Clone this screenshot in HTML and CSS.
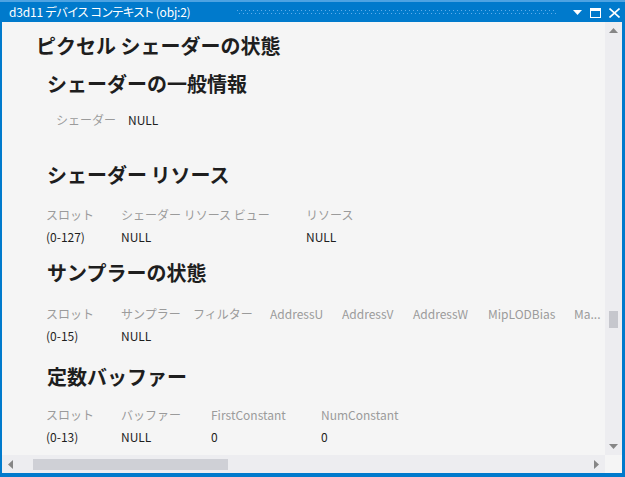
FILE: index.html
```html
<!DOCTYPE html>
<html lang="ja">
<head>
<meta charset="utf-8">
<link rel="stylesheet" href="styles.css">
</head>
<body>
<div class="window">
  <div class="titlebar">
    <span class="title">d3d11 デバイス コンテキスト (obj:2)</span>
    <span class="grip"></span>
    <span class="tbtns">
      <svg class="tb-drop" width="9" height="5" viewBox="0 0 9 5"><path d="M0 0H9L4.5 5Z" fill="#fff"/></svg>
      <svg class="tb-max" width="11" height="10" viewBox="0 0 11 10"><rect x="0.5" y="0.5" width="10" height="9" fill="none" stroke="#fff"/><rect x="0" y="0" width="11" height="3" fill="#fff"/></svg>
      <svg class="tb-close" width="11" height="10" viewBox="0 0 11 10"><path d="M0.5 0.5L10.5 9.5M10.5 0.5L0.5 9.5" stroke="#fff" stroke-width="1.6"/></svg>
    </span>
  </div>
  <div class="body">
    <div class="viewport">
      <h1 class="h1">ピクセル シェーダーの状態</h1>
      <h2 class="h2 h2-first">シェーダーの一般情報</h2>
      <div class="general">
        <span class="glabel">シェーダー</span>
        <span class="gvalue">NULL</span>
      </div>

      <h2 class="h2 h2-res">シェーダー リソース</h2>
      <div class="tbl tbl-res">
        <div class="th">スロット</div><div class="th">シェーダー リソース ビュー</div><div class="th">リソース</div>
        <div class="td">(0-127)</div><div class="td">NULL</div><div class="td">NULL</div>
      </div>

      <h2 class="h2 h2-samp">サンプラーの状態</h2>
      <div class="tbl tbl-samp">
        <div class="th">スロット</div><div class="th">サンプラー</div><div class="th">フィルター</div><div class="th">AddressU</div><div class="th">AddressV</div><div class="th">AddressW</div><div class="th">MipLODBias</div><div class="th">Ma...</div>
        <div class="td">(0-15)</div><div class="td">NULL</div><div class="td"></div><div class="td"></div><div class="td"></div><div class="td"></div><div class="td"></div><div class="td"></div>
      </div>

      <h2 class="h2 h2-cb">定数バッファー</h2>
      <div class="tbl tbl-cb">
        <div class="th">スロット</div><div class="th">バッファー</div><div class="th">FirstConstant</div><div class="th">NumConstant</div>
        <div class="td">(0-13)</div><div class="td">NULL</div><div class="td">0</div><div class="td">0</div>
      </div>
    </div>

    <div class="vscroll">
      <div class="arrow"><svg width="9" height="5" viewBox="0 0 9 5"><path d="M4.5 0L9 5H0Z" fill="#868686"/></svg></div>
      <div class="vtrack"><div class="vthumb"></div></div>
      <div class="arrow"><svg width="9" height="5" viewBox="0 0 9 5"><path d="M0 0H9L4.5 5Z" fill="#868686"/></svg></div>
    </div>
    <div class="hscroll">
      <div class="harrow"><svg width="5" height="9" viewBox="0 0 5 9"><path d="M0 4.5L5 0V9Z" fill="#868686"/></svg></div>
      <div class="htrack"><div class="hthumb"></div></div>
      <div class="harrow"><svg width="5" height="9" viewBox="0 0 5 9"><path d="M5 4.5L0 0V9Z" fill="#868686"/></svg></div>
    </div>
    <div class="corner"></div>
  </div>
</div>
</body>
</html>
```
FILE: styles.css
```css
* { box-sizing: border-box; }
html, body { margin: 0; padding: 0; }
body {
  width: 625px;
  height: 477px;
  overflow: hidden;
  font-family: "Noto Sans CJK JP", "Noto Sans", sans-serif;
  font-size: 12px;
  color: #1e1e1e;
  background: #007acc;
}
.window {
  width: 625px;
  height: 477px;
  display: flex;
  flex-direction: column;
  background: #007acc;
  border-left: 2px solid #007acc;
  border-right: 3px solid #007acc;
  border-bottom: 4px solid #007acc;
}
.titlebar {
  height: 22px;
  flex: none;
  display: flex;
  align-items: center;
  border-top: 2px solid #4da3e2;
  margin: 0 -3px 0 -2px;
  padding: 0 5px 0 9px;
  background: #007acc;
  color: #fff;
}
.title {
  font-size: 12px;
  line-height: 18px;
  font-feature-settings: "palt";
  letter-spacing: -0.2px;
  white-space: nowrap;
}
.grip {
  flex: 1;
  height: 5px;
  margin: 1px 16px 0 47px;
  background-image:
    linear-gradient(90deg, #5fadea 1px, transparent 1px),
    linear-gradient(90deg, #5fadea 1px, transparent 1px);
  background-size: 4px 1px, 4px 1px;
  background-position: 0 0, 2px 3px;
  background-repeat: repeat-x;
}
.tbtns {
  display: flex;
  align-items: center;
  gap: 8px;
}
.tb-drop { margin-top: 1px; }
.tb-max { margin-top: 1px; }
.tb-close { margin-top: 1px; }

.body {
  flex: 1;
  display: grid;
  grid-template-columns: 1fr 17px;
  grid-template-rows: 1fr 18px;
  min-height: 0;
}
.viewport {
  background: #f5f5f5;
  overflow: hidden;
  padding-top: 10px;
  white-space: nowrap;
}
.h1 {
  margin: 0 0 0 34px;
  font-size: 20px;
  line-height: 28px;
  font-weight: 700;
  color: #1e1e1e;
}
.h2 {
  margin: 0 0 0 45px;
  font-size: 20px;
  line-height: 28px;
  font-weight: 700;
  color: #1e1e1e;
  word-spacing: -1px;
}
.h2-first { margin-top: 10px; }
.h2-res { margin-top: 30px; }
.h2-samp { margin-top: 11px; }
.h2-cb { margin-top: 16px; }

.general {
  margin: 11px 0 0 54px;
  display: flex;
  line-height: 22px;
}
.glabel { color: #9b9b9b; width: 72px; }
.gvalue { color: #1e1e1e; }

.tbl {
  display: grid;
  margin-left: 44px;
  line-height: 22px;
}
.th { color: #9b9b9b; }
.td { color: #1e1e1e; }
.tbl-res {
  margin-top: 15px;
  grid-template-columns: 75px 185px 80px;
}
.tbl-samp {
  margin-top: 16px;
  grid-template-columns: 75px 72px 77px 72px 71px 75px 86px 40px;
}
.tbl-cb {
  margin-top: 13px;
  grid-template-columns: 75px 90px 110px 90px;
}

.vscroll {
  background: #ededf0;
  display: flex;
  flex-direction: column;
}
.arrow {
  height: 17px;
  display: flex;
  align-items: center;
  justify-content: center;
}
.vtrack {
  flex: 1;
  padding-top: 272px;
  display: flex;
  justify-content: center;
}
.vthumb {
  width: 9px;
  height: 17px;
  background: #c6c7cd;
}
.hscroll {
  background: #ededf0;
  display: flex;
}
.harrow {
  width: 17px;
  display: flex;
  align-items: center;
  justify-content: center;
}
.htrack {
  flex: 1;
  display: flex;
  align-items: center;
  padding-left: 14px;
}
.hthumb {
  width: 195px;
  height: 11px;
  background: #cfd0d6;
}
.corner {
  background: #f5f5f5;
}
```
